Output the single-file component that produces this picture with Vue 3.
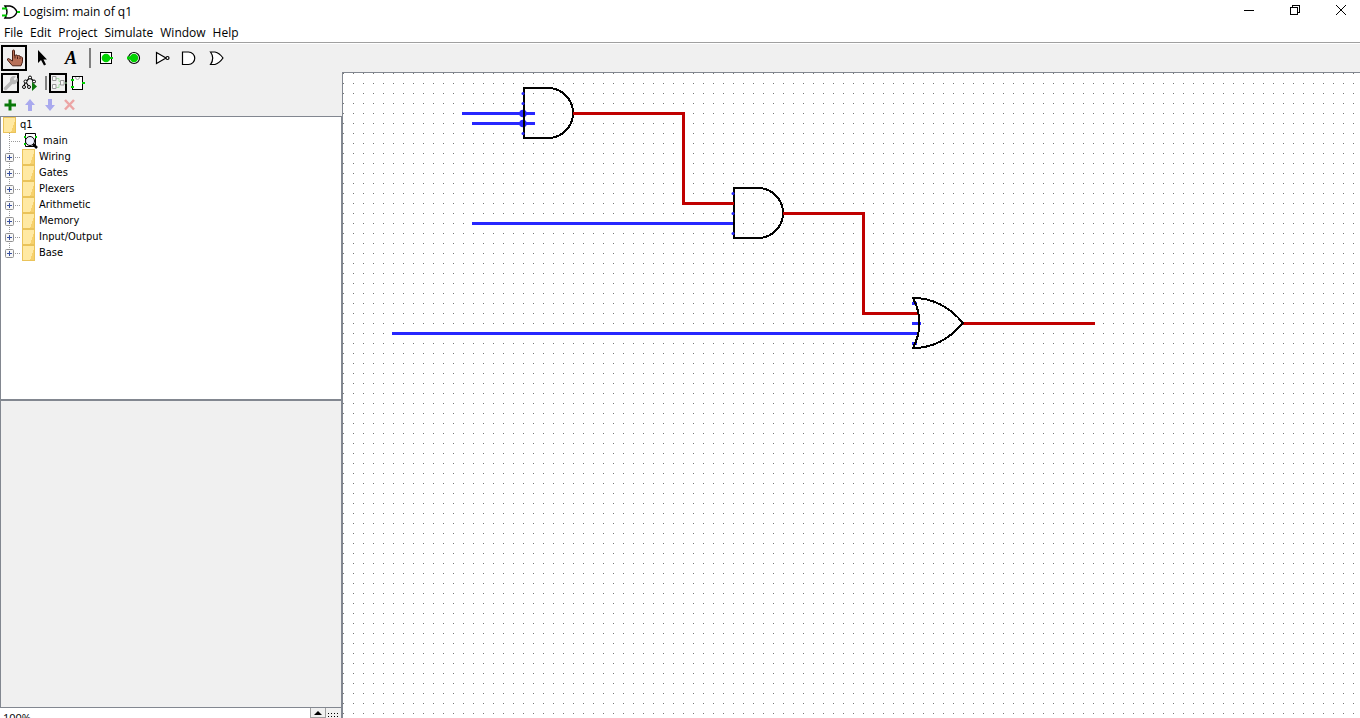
<script setup>
const menus = ['File', 'Edit', 'Project', 'Simulate', 'Window', 'Help']
const libraries = ['Wiring', 'Gates', 'Plexers', 'Arithmetic', 'Memory', 'Input/Output', 'Base']
const andGates = [
  { x: 181, y: 15, pins: [5, 15, 45] },
  { x: 391, y: 115, pins: [5, 25, 45] },
]
</script>

<template>
  <div class="app">
    <header class="titlebar">
      <svg class="logo" width="18" height="16" viewBox="0 0 18 16" fill="none">
        <path d="M3 2h5q5 1 7 6q-2 5-7 6H3q4-6 0-12z" fill="#fff" stroke="#000" stroke-width="1.4" />
        <path d="M0 4.500h5M0 11.500h5M15 8h3" stroke="#00c800" stroke-width="2" />
      </svg>
      <h1>Logisim: main of q1</h1>
      <div class="window-buttons">
        <button aria-label="Minimize"><svg width="12" height="12"><path d="M1 6.500h10" /></svg></button>
        <button aria-label="Restore"><svg width="12" height="12"><path d="M1.500 3.500h7v7h-7zM3.500 3V1.500h7v7H9" /></svg></button>
        <button aria-label="Close"><svg class="smooth" width="12" height="12"><path d="M1 1l10 10M11 1L1 11" /></svg></button>
      </div>
    </header>

    <nav class="menubar">
      <button v-for="m in menus" :key="m">{{ m }}</button>
    </nav>

    <div class="toolbar" role="toolbar">
      <button class="selected" aria-label="Poke tool">
        <svg width="20" height="20" viewBox="0 0 20 20">
          <path d="M8.500 3q0-1 1-1t1 1v5l1-1 1.500 0 .5 1 1-.500 1.500.500.5 1 1-.200 1 1v4l-1.500 4H8.500L6 15l-2.500-3q-.500-1.500 1-1.500L8.500 13z" fill="#b87058" stroke="#4a2015" />
          <path d="M11 8v2.500M13.500 8.500v2.500M16 9.500v1.500" stroke="#4a2015" fill="none" />
        </svg>
      </button>
      <button aria-label="Edit tool">
        <svg width="20" height="20" viewBox="0 0 20 20"><path d="M6 2v13l3-3 3 5.500 2-1-2.500-5H15z" /></svg>
      </button>
      <button class="text-tool" aria-label="Text tool">A</button>
      <span class="separator"></span>
      <button aria-label="Input pin">
        <svg width="20" height="20" viewBox="0 0 20 20"><path d="M4.500 4.500h11v11h-11z" fill="#fff" stroke="#000" shape-rendering="crispEdges" /><circle cx="10" cy="10" r="4.300" fill="#00d200" /><path d="M13 10h4" stroke="#00d200" stroke-width="2" /></svg>
      </button>
      <button aria-label="Output pin">
        <svg width="20" height="20" viewBox="0 0 20 20"><circle cx="10" cy="10" r="5.500" fill="#fff" stroke="#000" stroke-width="1.200" /><circle cx="10" cy="10" r="4.200" fill="#00d200" /><path d="M3 10h4" stroke="#00d200" stroke-width="3" /></svg>
      </button>
      <button aria-label="NOT gate">
        <svg width="20" height="20" viewBox="0 0 20 20" fill="#fff" stroke="#000" stroke-width="1.200"><path d="M4.500 4.500v11L14 10z" /><circle cx="15.500" cy="10" r="1.500" /></svg>
      </button>
      <button aria-label="AND gate">
        <svg width="20" height="20" viewBox="0 0 20 20" fill="#fff" stroke="#000" stroke-width="1.200"><path d="M2.500 4h6a6 6 0 0 1 0 12.500h-6z" /></svg>
      </button>
      <button aria-label="OR gate">
        <svg width="20" height="20" viewBox="0 0 20 20" fill="#fff" stroke="#000" stroke-width="1.200"><path d="M2.500 4H7q4.500 1 8 6q-3.500 5-8 6.500H2.500Q7 10 2.500 4z" /></svg>
      </button>
    </div>

    <main class="workspace">
      <aside class="sidebar">
        <div class="mini-bar" role="toolbar">
          <button class="selected" aria-label="Show toolbox">
            <svg width="16" height="16" viewBox="0 0 16 16"><path d="M2.500 13.500L9 7" stroke="#b8b8b8" stroke-width="3.500" stroke-linecap="round" /><path d="M13 1.500L10.500 4l1.500 1.500L14.500 3q1 3-1 5t-4.500 1-2-4.500T11 1z" fill="#b8b8b8" /></svg>
          </button>
          <button aria-label="Show simulation tree">
            <svg width="16" height="16" viewBox="0 0 16 16"><path d="M8 2.500L4 6.500M8 2.500l4 4M3.500 7L1.500 12M4 7l3 5" stroke="#000" stroke-width="1.200" fill="none" /><g fill="#fff" stroke="#000"><circle cx="8" cy="2.500" r="1.500" /><circle cx="3.500" cy="6.500" r="1.500" /><circle cx="12" cy="6.500" r="1.500" /><circle cx="2" cy="12" r="1.500" /><circle cx="7" cy="12" r="1.500" /></g><path d="M10 7v9l5-4.500z" fill="#0b760b" /></svg>
          </button>
          <span class="separator"></span>
          <button class="selected" aria-label="Edit layout">
            <svg width="16" height="16" viewBox="0 0 16 16" fill="#fafafa" stroke="#999"><path d="M5 3.500h3v3h3M5 12.500h3v-3h3M12 8h4" stroke="#a9dca9" fill="none" /><path d="M1.500 1.500H5v4H1.500zM1.500 9.500H5v4H1.500zM9.500 5.500H13v4.500H9.500z" /></svg>
          </button>
          <button aria-label="Edit appearance">
            <svg width="16" height="16" viewBox="0 0 16 16"><path d="M2.500 1.500h10v13h-10z" fill="#fff" stroke="#000" shape-rendering="crispEdges" /><path d="M5.500 2q0 2.500 2 2.500t2-2.500" fill="none" stroke="#aaa" /><path d="M1 5h3M1 12h3M12 8h3" stroke="#00d200" stroke-width="2" /></svg>
          </button>
        </div>
        <div class="mini-bar" role="toolbar">
          <button aria-label="Add circuit"><svg width="16" height="16"><path d="M6.500 2.500h3v4H14v3H9.500v4h-3v-4H2.500v-3h4z" fill="#087808" /></svg></button>
          <button aria-label="Move up"><svg width="16" height="16"><path d="M8 2l5 6h-3v6H6V8H3z" fill="#a9a9ee" /></svg></button>
          <button aria-label="Move down"><svg width="16" height="16"><path d="M8 14l5-6h-3V2H6v6H3z" fill="#a9a9ee" /></svg></button>
          <button aria-label="Remove circuit"><svg width="16" height="16"><path d="M3 3l9 9.500M12 3l-9 9.500" stroke="#eca5a5" stroke-width="2.500" /></svg></button>
        </div>

        <div class="tree">
          <div class="row root">
            <span class="folder"></span><span>q1</span>
          </div>
          <ul>
            <li class="row circuit">
              <span class="branch"></span>
              <svg width="16" height="16" viewBox="0 0 16 16"><path d="M3.500.5h10v13h-10z" fill="#fff" stroke="#000" /><path d="M2 4h2M2 11h2M13 4h2" stroke="#00c800" stroke-width="2" /><path d="M11 11l4 4" stroke="#000" stroke-width="2.500" /><circle cx="8" cy="8" r="4.500" fill="#eef0ff" stroke="#000" /></svg>
              <span>main</span>
            </li>
            <li v-for="name in libraries" :key="name" class="row library">
              <button class="expander" :aria-label="'Expand ' + name">
                <svg width="9" height="9"><rect x=".5" y=".5" width="8" height="8" rx="1" fill="#f7f7f7" stroke="#919191" /><path d="M2 4.500h5M4.500 2v5" stroke="#3850a0" /></svg>
              </button>
              <span class="branch"></span>
              <span class="folder"></span>
              <span>{{ name }}</span>
            </li>
          </ul>
        </div>
        <div class="attributes"></div>
        <footer class="zoom">
          <label class="zoom-field"><input value="100%" aria-label="Zoom"></label>
          <button class="spin" aria-label="Increase zoom"><svg width="8" height="4"><path d="M0 4l4-4 4 4z" /></svg></button>
          <button class="grid-toggle" aria-label="Show grid">
            <svg width="13" height="10" shape-rendering="crispEdges"><path d="M1 5.500h12M1 8.500h12" stroke="#000" stroke-dasharray="1 2" /></svg>
          </button>
        </footer>
      </aside>

      <section class="canvas" aria-label="Circuit layout">
        <svg width="100%" height="100%" fill="none">
          <defs>
            <pattern id="grid" width="10" height="10" patternUnits="userSpaceOnUse">
              <rect width="1" height="1" fill="#777" />
            </pattern>
          </defs>
          <rect width="100%" height="100%" fill="url(#grid)" />
          <g stroke="#2828ff" stroke-width="3">
            <path d="M119 40.500h73M129 50.500h63M129 150.500h262M49 260.500h527M569 250.500h9" />
            <path d="M569 230.500h5M569 270.500h5" />
          </g>
          <g fill="#2828ff">
            <circle cx="180" cy="40.500" r="3.800" />
            <circle cx="180" cy="50.500" r="3.800" />
          </g>
          <g v-for="(g, i) in andGates" :key="i" :transform="`translate(${g.x} ${g.y})`">
            <path d="M0 0H24A25 25 0 0 1 24 50H0Z" stroke="#000" stroke-width="2" shape-rendering="crispEdges" />
            <circle v-for="p in g.pins" :key="p" cx="-1" :cy="p + 0.5" r="1.500" fill="#2828ff" />
          </g>
          <g stroke="#c00000" stroke-width="3">
            <path d="M230 40.500H340.500V130.500H391" />
            <path d="M440 140.500H520.500V240.500H576" />
            <path d="M619 250.500H752" />
          </g>
          <path d="M570 225Q599 225 620 250Q599 275 570 275Q583 250 570 225Z" stroke="#000" stroke-width="2" shape-rendering="crispEdges" />
        </svg>
      </section>
    </main>
  </div>
</template>

<style>
body { overflow: hidden; }
</style>

<style scoped>
.app {
  display: flex;
  flex-direction: column;
  height: 100vh;
  overflow: hidden;
  background: #f0f0f0;
  color: #000;
  font: 12px/16px "Open Sans", "Noto Sans", sans-serif;
}
button {
  border: 0;
  padding: 0;
  margin: 0;
  background: none;
  color: inherit;
  font: inherit;
}
svg { display: block; flex: none; }
.titlebar {
  display: flex;
  align-items: center;
  height: 23px;
  padding-left: 2px;
  background: #fff;
}
h1 { margin: 0 0 0 3px; font-size: 12px; font-weight: 400; }
.window-buttons { display: flex; margin-left: auto; align-self: flex-start; }
.window-buttons button {
  display: grid;
  place-items: center;
  width: 46px;
  height: 20px;
}
.window-buttons button:last-child { padding-right: 0; margin-right: -4px; }
.window-buttons svg { fill: none; stroke: #000; shape-rendering: crispEdges; }
.window-buttons svg.smooth { shape-rendering: auto; }
.menubar {
  display: flex;
  gap: 7px;
  height: 19px;
  padding-left: 4px;
  background: #fff;
  border-bottom: 1px solid #a0a0a0;
}
.toolbar {
  display: flex;
  align-items: flex-start;
  gap: 2px;
  height: 27px;
  padding: 1px 1px 0;
  border-top: 1px solid #fff;
}
.toolbar button {
  display: grid;
  place-items: center;
  box-sizing: border-box;
  width: 26px;
  height: 26px;
}
.toolbar .selected, .mini-bar .selected { border: 2px solid #000; }
.toolbar .text-tool { padding-left: 2px; font: italic bold 18px/20px "Liberation Serif", serif; }
.separator { width: 2px; height: 20px; margin: 3px 0 0 4px; background: #808080; }
.workspace { display: flex; flex: 1; min-height: 0; }
.sidebar {
  display: flex;
  flex-direction: column;
  flex: none;
  width: 342px;
}
.mini-bar {
  display: flex;
  align-items: center;
  gap: 2px;
  height: 22px;
  padding-left: 1px;
}
.mini-bar button {
  display: grid;
  place-items: center;
  box-sizing: border-box;
  width: 18px;
  height: 20px;
}
.mini-bar .separator { height: 14px; margin-top: 0; }
.tree {
  flex: 282 1 0;
  border: 1px solid #828790;
  border-bottom-width: 2px;
  background: #fff;
  font: 11px/16px "DejaVu Sans Condensed", "DejaVu Sans", sans-serif;
  overflow: hidden;
}
.tree ul {
  margin: 0 0 0 8px;
  padding: 0;
  list-style: none;
  background: repeating-linear-gradient(#999 0 1px, transparent 1px 2px) 0 0 / 1px 120px no-repeat;
}
.row { display: flex; align-items: center; height: 16px; }
.root { gap: 4px; padding-left: 2px; }
.folder {
  box-sizing: border-box;
  width: 13px;
  height: 16px;
  border: 1px solid #eac35a;
  background: linear-gradient(110deg, #ffe9a3 75%, #f6d16d 75%);
}
.branch {
  width: 12px;
  height: 1px;
  background: repeating-linear-gradient(90deg, #999 0 1px, transparent 1px 2px);
}
.circuit { gap: 4px; }
.circuit svg { margin-left: -3px; }
.circuit span:last-child { margin-left: 1px; }
.library { margin-left: -4px; }
.expander { width: 9px; height: 9px; }
.library .branch { width: 5px; margin: 0 2px 0 1px; }
.library .folder { margin-right: 4px; }
.attributes {
  flex: 307 1 0;
  border: solid #828790;
  border-width: 0 1px 1px;
}
.zoom {
  display: flex;
  height: 10px;
  overflow: hidden;
  border-right: 1px solid #828790;
}
.zoom-field { display: flex; flex: 1; }
.zoom-field input {
  flex: 1;
  height: 20px;
  min-width: 0;
  padding: 0 3px;
  border: 0;
  background: #fff;
  font: 11px/20px "Open Sans", sans-serif;
}
.spin {
  display: grid;
  place-items: center;
  width: 16px;
  height: 10px;
  border: solid #a0a0a0;
  border-width: 0 1px 1px;
}
.grid-toggle { width: 15px; padding-left: 1px; }
.canvas {
  flex: 1;
  min-width: 0;
  border: solid #828790;
  border-width: 1px 0 0 1px;
  background: #fff;
}
</style>
